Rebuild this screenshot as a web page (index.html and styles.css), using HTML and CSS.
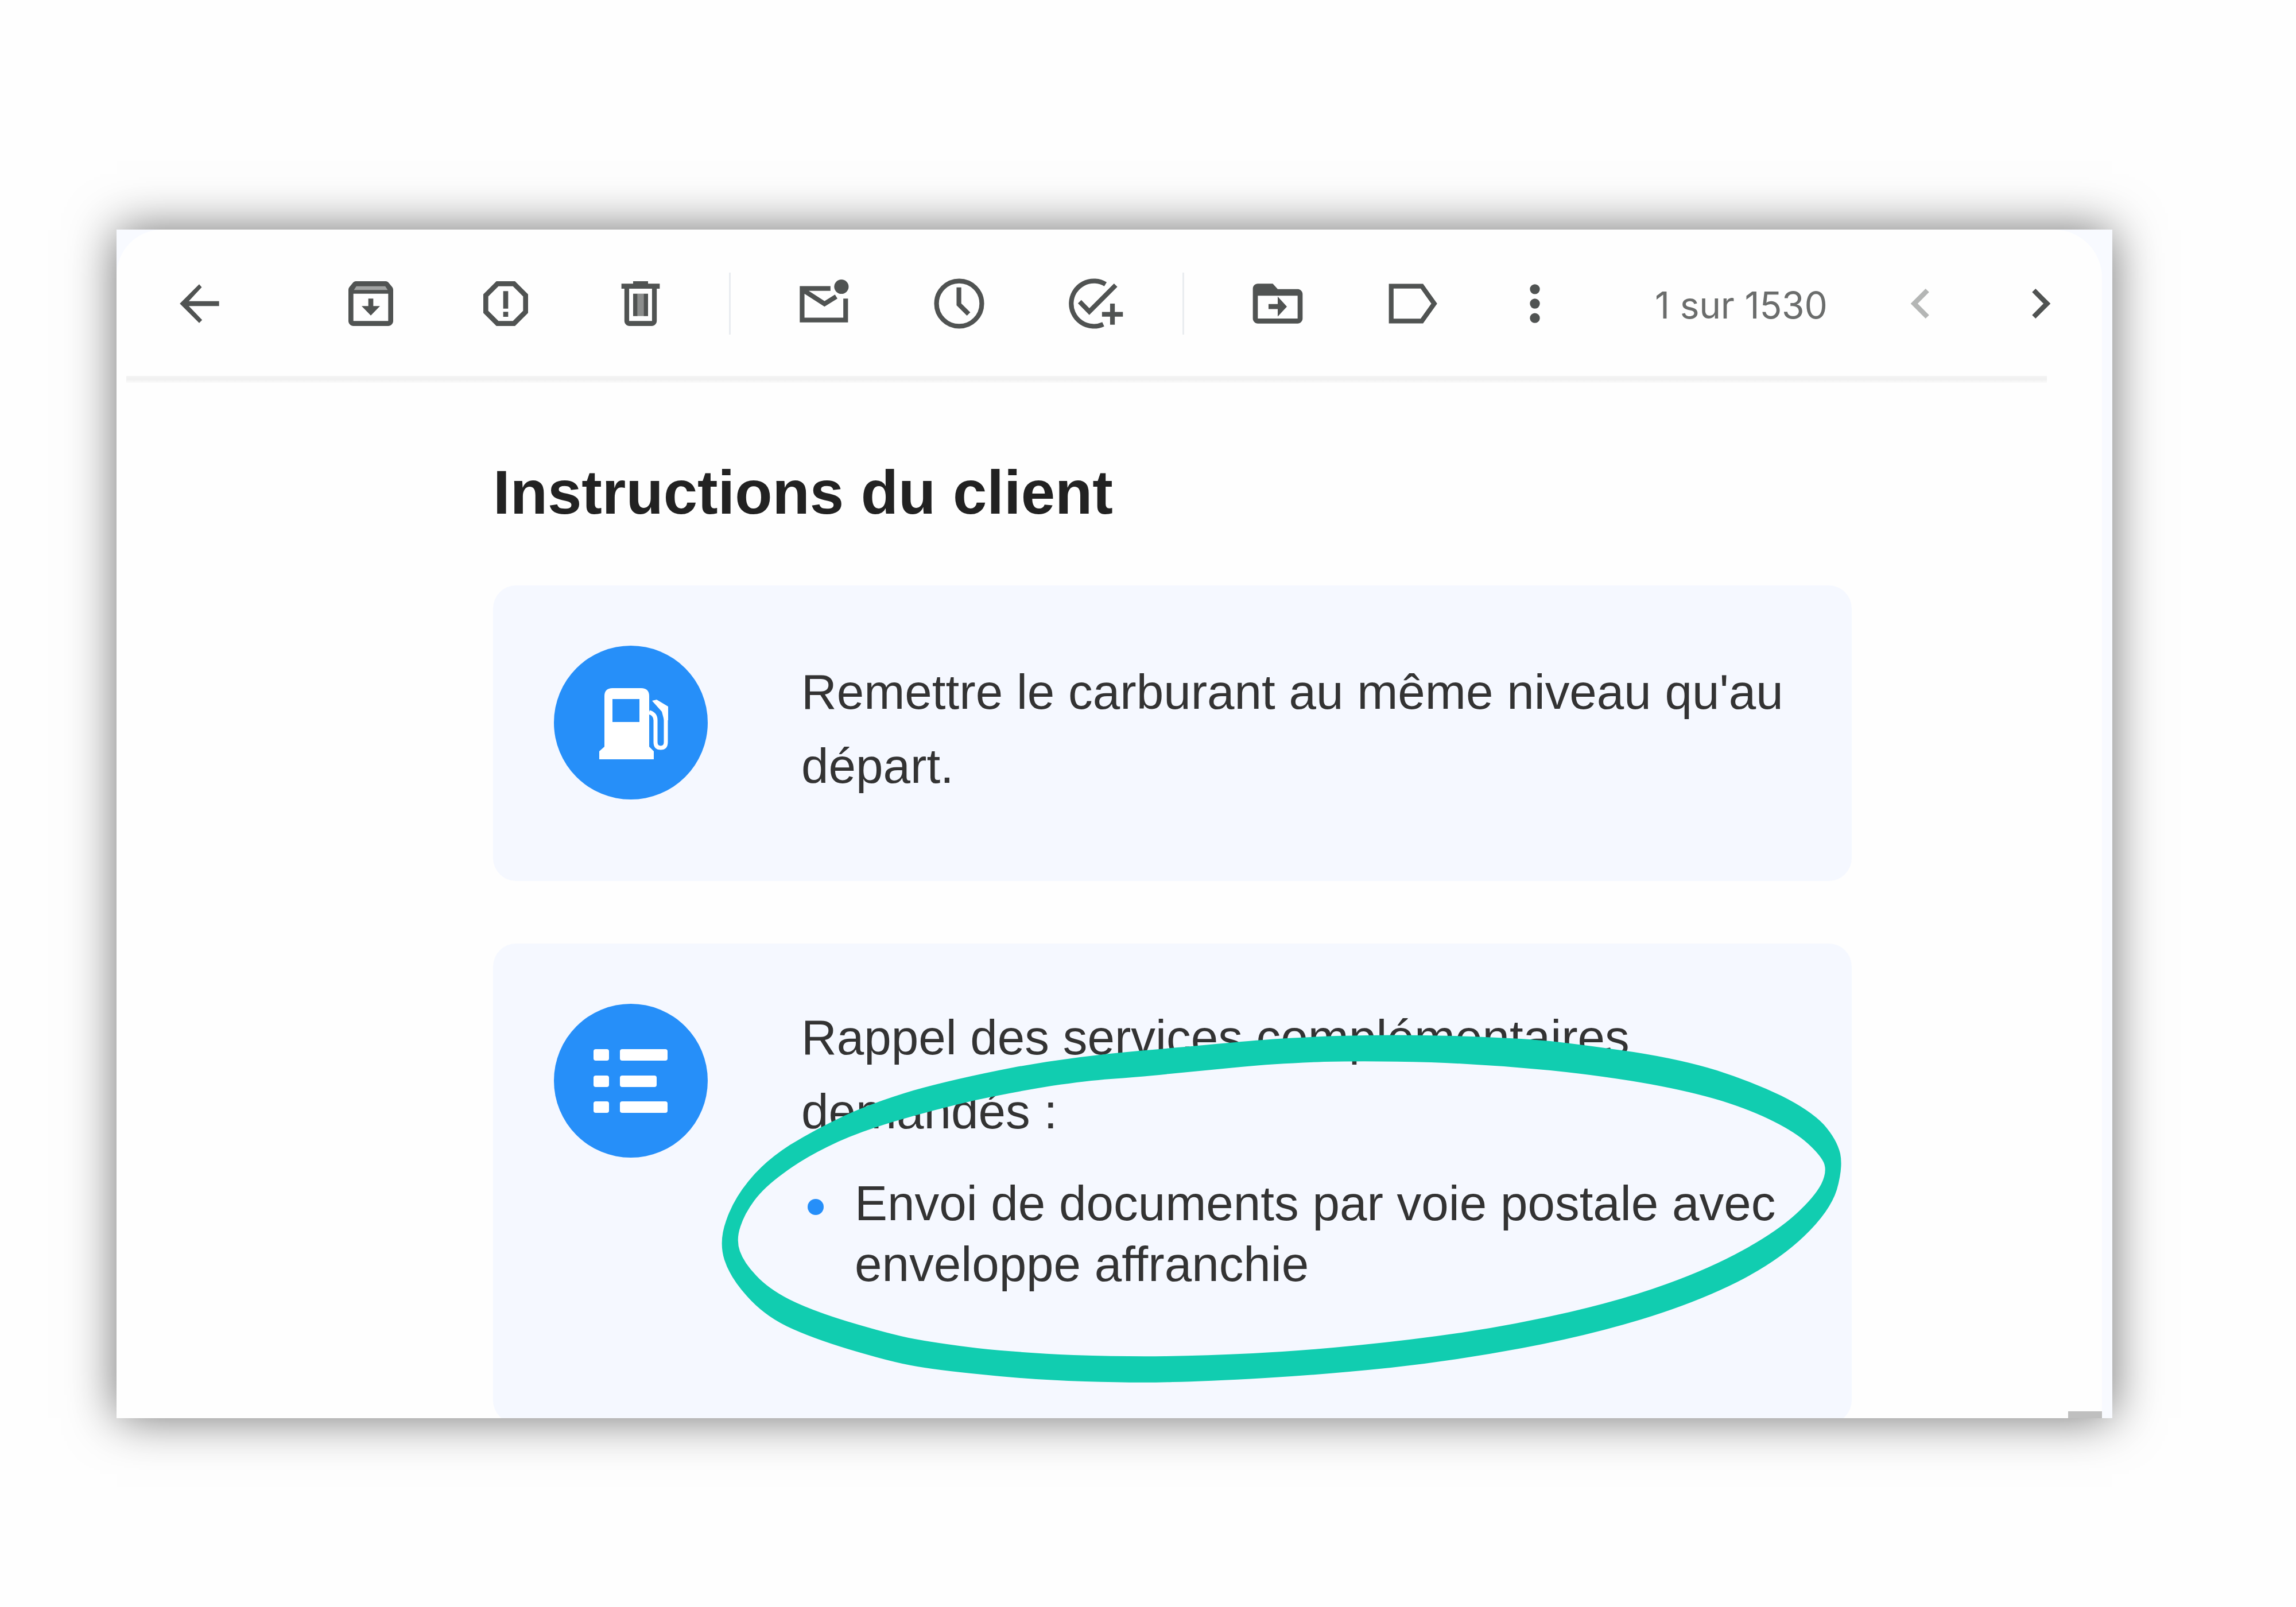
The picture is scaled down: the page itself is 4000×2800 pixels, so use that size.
FILE: index.html
```html
<!DOCTYPE html>
<html lang="fr">
<head>
<meta charset="utf-8">
<title>Instructions du client</title>
<link rel="stylesheet" href="styles.css">
</head>
<body>
<main class="window">
  <div class="panel">
    <header class="toolbar">
      <svg class="icon back" viewBox="0 0 24 24"><path d="M20 11H7.83l5.200-5.590L12 4.200l-7.800 7.800 7.800 7.800 1.200-1.210L7.830 13H20z"/></svg>
      <div class="group">
        <svg class="icon" viewBox="0 0 24 24"><path d="M20.54 5.23l-1.39-1.68C18.88 3.21 18.47 3 18 3H6c-.47 0-.88.21-1.16.55L3.46 5.23C3.17 5.57 3 6.02 3 6.5V19c0 1.1.9 2 2 2h14c1.1 0 2-.9 2-2V6.5c0-.48-.17-.93-.46-1.27zM5 19V8h14v11H5z"/><path class="light" d="M6.2 5h11.6l1 1.500H5.200z"/><path d="M13 10h-2v3H8.300l3.700 3.800 3.700-3.800H13z"/></svg>
        <svg class="icon" viewBox="0 0 24 24"><path d="M15.730 3H8.270L3 8.270v7.460L8.270 21h7.460L21 15.730V8.270L15.730 3zM19 14.900L14.900 19H9.100L5 14.900V9.100L9.100 5h5.800L19 9.100v5.800zM11 7h2v7h-2zM11 15.300h2v2h-2z"/></svg>
        <svg class="icon" viewBox="0 0 24 24"><path d="M15 4V3H9v1H4.300v2H5.500v13c0 1.100.9 2 2 2h9c1.100 0 2-.9 2-2V6h1.200V4zm1.600 15H7.400V6h9.200v13z"/><path d="M9 8h1.800v9H9zM13.200 8H15v9h-1.800z"/><path class="soft" d="M10.800 8h2.400v9h-2.400z"/></svg>
      </div>
      <span class="divider"></span>
      <div class="group">
        <svg class="icon" viewBox="0 0 24 24"><path class="line" d="M14.500 5.900H3.100v12.700h17.500V10M3.100 6.300l9 5.800 4.700-2.900"/><circle cx="18.900" cy="5.200" r="2.900"/></svg>
        <svg class="icon" viewBox="0 0 24 24"><circle class="line" cx="12" cy="12" r="9.100"/><path class="line" d="M11.900 5.500v6.800l3.900 3.900"/></svg>
        <svg class="icon" viewBox="0 0 24 24"><path class="line" d="M16.600 4.200A9.100 9.100 0 1 0 15.700 20.300M6.200 11.200l3.900 4L20.700 4.600M19.400 12v8.500M15.200 16.300h8.400"/></svg>
      </div>
      <span class="divider"></span>
      <div class="group">
        <svg class="icon" viewBox="0 0 24 24"><path d="M20 6.200h-8l-2-2.200H4c-1.100 0-2 .9-2 2v12c0 1.100.9 2 2 2h16c1.100 0 2-.9 2-2V8.200c0-1.100-.9-2-2-2zM20 18H4V8.800h16V18z"/><path d="M12 17.200l3.700-4-3.700-4v3H8.300v2H12z"/></svg>
        <svg class="icon" viewBox="0 0 24 24"><path class="line" d="M3.400 5h12.300l5 7-5 7H3.400z"/></svg>
      </div>
      <svg class="icon more" viewBox="0 0 24 24"><circle cx="12" cy="6.200" r="2"/><circle cx="12" cy="12" r="2"/><circle cx="12" cy="17.800" r="2"/></svg>
      <span class="count">1 sur 1530</span>
      <svg class="icon prev" viewBox="0 0 24 24"><path d="M15.410 7.410L14 6l-6 6 6 6 1.410-1.410L10.830 12z"/></svg>
      <svg class="icon next" viewBox="0 0 24 24"><path d="M8.590 16.590L13.170 12 8.590 7.410 10 6l6 6-6 6z"/></svg>
    </header>
    <div class="rule"></div>
    <section class="content">
      <h1 class="title">Instructions du client</h1>
      <article class="card">
        <svg class="badge" viewBox="0 0 270 270">
          <circle class="disc" cx="135" cy="135" r="134"/>
          <path class="glyph" fill-rule="evenodd" d="M89 89q0-14 14-14h50q14 0 14 14v88l8 8v14H80v-14l9-8zM103 94v40h47V94z"/>
          <path class="hose" d="M167 117q11 3 11 14v38q0 10 9 10t9-10v-58"/>
          <path class="glyph" d="M172 97l8-2 20 12v24h-7l-4-15z"/>
        </svg>
        <p class="text">Remettre le carburant au même niveau qu'au départ.</p>
      </article>
      <article class="card tall">
        <svg class="badge" viewBox="0 0 270 270">
          <circle class="disc" cx="135" cy="135" r="134"/>
          <g class="glyph">
            <rect x="70" y="80" width="27" height="20" rx="4"/><rect x="116" y="80" width="83" height="20" rx="4"/>
            <rect x="70" y="126" width="27" height="20" rx="4"/><rect x="116" y="126" width="64" height="20" rx="4"/>
            <rect x="70" y="171" width="27" height="20" rx="4"/><rect x="116" y="171" width="83" height="20" rx="4"/>
          </g>
        </svg>
        <div class="text">
          <p class="lead">Rappel des services complémentaires demandés :</p>
          <ul class="list"><li class="item"><span class="bullet"></span><span>Envoi de documents par voie postale avec enveloppe affranchie</span></li></ul>
        </div>
      </article>
    </section>
  </div>
  <span class="scroll-end"></span>
</main>
<svg class="highlight" viewBox="0 0 4000 2800"><path fill-rule="evenodd" d="M1262 2195Q1252 2163 1265 2127Q1277 2091 1304 2058Q1331 2024 1376 1995Q1422 1967 1471 1944Q1521 1921 1591 1900Q1662 1880 1765 1860Q1869 1841 1984 1831Q2100 1821 2162 1815Q2224 1809 2328 1805Q2432 1802 2535 1805Q2639 1808 2701 1814Q2763 1821 2846 1833Q2929 1846 2991 1865Q3053 1885 3103 1909Q3153 1934 3177 1959Q3200 1985 3206 2010Q3211 2035 3200 2073Q3188 2111 3143 2154Q3097 2198 3026 2234Q2954 2270 2859 2299Q2763 2328 2651 2349Q2539 2370 2423 2383Q2307 2395 2204 2401Q2100 2407 2043 2408Q1985 2410 1890 2407Q1795 2404 1712 2395Q1629 2387 1587 2379Q1546 2371 1479 2351Q1413 2331 1371 2311Q1330 2291 1301 2258Q1272 2226 1262 2195Z
M1289 2180Q1282 2160 1290 2137Q1297 2115 1314 2092Q1331 2069 1364 2045Q1397 2020 1442 1998Q1488 1975 1558 1954Q1629 1933 1699 1917Q1770 1902 1832 1892Q1894 1883 1935 1880Q1977 1877 2038 1871Q2100 1865 2162 1859Q2224 1853 2307 1850Q2390 1848 2493 1851Q2597 1855 2701 1865Q2805 1876 2875 1889Q2946 1902 2999 1918Q3053 1935 3090 1954Q3128 1973 3149 1992Q3170 2011 3177 2025Q3184 2040 3173 2063Q3161 2086 3128 2116Q3095 2146 3037 2178Q2979 2210 2904 2237Q2830 2264 2735 2286Q2639 2308 2552 2321Q2465 2334 2365 2344Q2266 2354 2183 2358Q2100 2362 2030 2363Q1961 2364 1870 2361Q1778 2357 1703 2349Q1629 2340 1583 2331Q1538 2321 1475 2302Q1413 2283 1375 2264Q1338 2245 1317 2222Q1296 2200 1289 2180Z"/></svg>
</body>
</html>
```
FILE: styles.css
```css
* { box-sizing: border-box; }

body {
  margin: 0;
  width: 4000px;
  height: 2800px;
  padding: 400px 0 0 203px;
  overflow: hidden;
  position: relative;
  background: #fefefe;
  font-family: "Liberation Sans", Arial, sans-serif;
}

.window {
  position: relative;
  width: 3477px;
  height: 2071px;
  background: #f8faff;
  box-shadow: 0 0 80px rgba(0, 0, 0, 0.56);
}

.panel {
  width: 3459px;
  height: 2071px;
  overflow: hidden;
  border-radius: 80px 84px 0 0;
  background: #fefefe;
}

.toolbar {
  display: flex;
  align-items: center;
  height: 255px;
  padding: 2px 0 0 92px;
}

.icon {
  flex: none;
  width: 104px;
  height: 104px;
  fill: #505352;
}

.line {
  fill: none;
  stroke: #505352;
  stroke-width: 1.9;
}

.light { fill: #a2a4a3; }
.soft { fill: #8b8d8c; }

.back { margin-right: 195px; }
.group { display: flex; gap: 131px; }

.divider {
  width: 3px;
  height: 108px;
  margin: 0 111px 0 102px;
  background: #e9ecf0;
}

.more { margin-left: 109px; }

.count {
  width: 304px;
  margin: 6px 0 0 157px;
  font-family: Inter, "Liberation Sans", sans-serif;
  font-size: 64px;
  letter-spacing: -0.2px;
  color: #6b6d6c;
  white-space: nowrap;
}

.prev { margin-left: 107px; fill: #b4b6b5; }
.next { margin-left: 105px; }

.rule {
  width: 3346px;
  height: 12px;
  margin-left: 17px;
  background: linear-gradient(#f4f4f4, #f0f0f0 50%, #fbfbfb);
}

.content { width: 2367px; margin-left: 656px; }

.title {
  margin: 0;
  padding-top: 129px;
  height: 353px;
  font-size: 106.800px;
  line-height: 124px;
  color: #222;
}

.card {
  display: flex;
  align-items: flex-start;
  gap: 162px;
  height: 515px;
  margin-bottom: 109px;
  padding: 104px 60px 0 105px;
  border-radius: 40px;
  background: #f5f8ff;
}

.tall { height: 836px; }

.badge { flex: none; width: 270px; height: 270px; }
.disc { fill: #268ff9; }
.glyph { fill: #fff; }
.hose { fill: none; stroke: #fff; stroke-width: 7; }

.text {
  margin: 18px 0 0;
  font-size: 85.400px;
  line-height: 128.500px;
  color: #333;
}

.tall .text { margin-top: -4px; }
.lead { margin: 0; }
.list { margin: 0; padding: 43px 0 0; list-style: none; }

.item {
  display: flex;
  gap: 54px;
  padding-left: 11px;
  line-height: 106px;
}

.bullet {
  flex: none;
  width: 28px;
  height: 28px;
  margin-top: 45px;
  border-radius: 50%;
  background: #268ff9;
}

.scroll-end {
  position: absolute;
  right: 18px;
  bottom: 0;
  width: 59px;
  height: 12px;
  background: #bfbfbf;
}

.highlight {
  position: absolute;
  left: 0;
  top: 0;
  width: 4000px;
  height: 2800px;
  fill: #11cdb0;
}
```
